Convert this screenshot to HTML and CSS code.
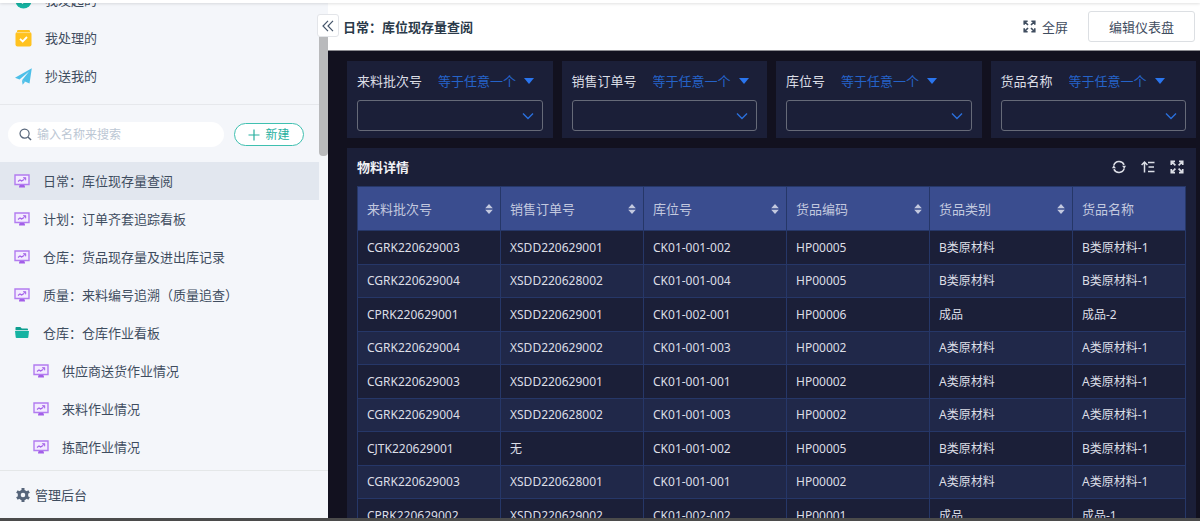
FILE: index.html
```html
<!DOCTYPE html>
<html lang="zh-CN">
<head>
  <meta charset="UTF-8">
  <meta name="viewport" content="width=device-width, initial-scale=1.0">
  <title>日常：库位现存量查阅</title>
  <link rel="stylesheet" href="styles.css">
</head>
<body>

<svg class="sprite" aria-hidden="true">
  <symbol id="icon-board" viewBox="0 0 16 14">
    <path d="M1 1h14v9.500H1z" fill="#f3ebff" stroke="#b27cf0" stroke-width="1.400"/>
    <path d="M4 7.500l2-1.600 1.600 1.200L10 5.400" fill="none" stroke="#a35fe8" stroke-width="1.200"/>
    <path d="M9.200 3.600h2.600v2.600z" fill="#a35fe8" stroke="#a35fe8" stroke-width=".6"/>
    <path d="M5.500 11h5v1.200H11v1.400H5v-1.400h.5z" fill="#a35fe8"/>
  </symbol>
  <symbol id="icon-expand" viewBox="0 0 14 14">
    <path d="M1.300 5V1.300H5M9 1.300h3.700V5M12.700 9v3.700H9M5 12.700H1.300V9M1.500 1.500l3.900 3.900M12.500 1.500L8.600 5.400M12.500 12.500L8.600 8.600M1.500 12.500l3.900-3.900" fill="none" stroke="currentColor" stroke-width="1.700"/>
  </symbol>
  <symbol id="icon-down" viewBox="0 0 12 8">
    <path d="M1 1.500l5 5 5-5" fill="none" stroke="currentColor" stroke-width="1.400"/>
  </symbol>
  <symbol id="icon-caret" viewBox="0 0 10 6">
    <path d="M0 0h10L5 6z" fill="currentColor"/>
  </symbol>
  <symbol id="icon-sort" viewBox="0 0 8 10">
    <path d="M4 0l3.800 4.300H.2zM4 10L.2 5.700h7.600z" fill="currentColor"/>
  </symbol>
</svg>

<div class="topbar"></div>

<div class="app">
  <aside class="sidebar">
    <div class="sidebar-scroll">
      <nav class="quick">
        <a href="#"><svg class="icon-quick" viewBox="0 0 17 17"><circle cx="8.500" cy="8.500" r="8" fill="#16b3a2"/><path d="M5 8.500l2.500 2.500L12 6.500" fill="none" stroke="#fff" stroke-width="1.500"/></svg>我发起的</a>
        <a href="#"><svg class="icon-quick" viewBox="0 0 17 17"><rect x="2" y="0" width="13" height="3" rx="1.200" fill="#ffc21f"/><rect x=".5" y="2" width="16" height="14.500" rx="2" fill="#ffc21f"/><path d="M1.500 2.600h14" stroke="#fbe3a4" stroke-width=".8"/><path d="M5 8.800l2.700 2.600L12 7" fill="none" stroke="#fff" stroke-width="1.800"/></svg>我处理的</a>
        <a href="#"><svg class="icon-quick" viewBox="0 0 17 17"><path d="M16.800.2L0 9.800l4.500 1.600L14 3.600 7 12.200l7.500 3.400zM7 12.400l.6 4.400 2.500-3z" fill="#4cbfe8"/></svg>抄送我的</a>
      </nav>

      <div class="search-row">
        <label class="search">
          <svg class="icon-search" viewBox="0 0 14 14"><circle cx="6" cy="6" r="4.900" fill="none" stroke="#56657a" stroke-width="1.300"/><path d="M9.600 9.600l3.400 3.400" stroke="#56657a" stroke-width="1.500"/></svg>
          <input type="text" placeholder="输入名称来搜索" aria-label="搜索">
        </label>
        <button class="btn-new"><svg class="icon-plus" viewBox="0 0 12 12"><path d="M6 .5v11M.5 6h11" stroke="currentColor" stroke-width="1.200"/></svg>新建</button>
      </div>

      <nav class="menu">
        <a href="#" class="active"><svg class="icon-menu"><use href="#icon-board"/></svg>日常：库位现存量查阅</a>
        <a href="#"><svg class="icon-menu"><use href="#icon-board"/></svg>计划：订单齐套追踪看板</a>
        <a href="#"><svg class="icon-menu"><use href="#icon-board"/></svg>仓库：货品现存量及进出库记录</a>
        <a href="#"><svg class="icon-menu"><use href="#icon-board"/></svg>质量：来料编号追溯（质量追查）</a>
        <a href="#"><svg class="icon-menu" viewBox="0 0 16 14"><path d="M1.500 1.800q0-.8.8-.8h4l1.500 1.500h5.400q.8 0 .8.900v.800H1.500z" fill="#0d9e8f"/><path d="M1 5h14l-.7 6.300q-.1.700-.8.700h-11q-.7 0-.8-.7z" fill="#16b3a2"/></svg>仓库：仓库作业看板</a>
        <a href="#" class="child"><svg class="icon-menu"><use href="#icon-board"/></svg>供应商送货作业情况</a>
        <a href="#" class="child"><svg class="icon-menu"><use href="#icon-board"/></svg>来料作业情况</a>
        <a href="#" class="child"><svg class="icon-menu"><use href="#icon-board"/></svg>拣配作业情况</a>
      </nav>
    </div>
    <div class="scroll-thumb"></div>
    <a href="#" class="admin"><svg class="icon-gear" viewBox="0 0 14 14"><circle cx="7" cy="7" r="3.800" fill="none" stroke="#56657a" stroke-width="3"/><path d="M7 0v3M7 11v3M.9 3.500l2.600 1.500M10.500 9l2.600 1.500M.9 10.500L3.500 9M10.500 5l2.600-1.500" stroke="#56657a" stroke-width="3"/></svg>管理后台</a>
    <button class="collapse" aria-label="收起"><svg class="icon-collapse" viewBox="0 0 12 12"><path d="M6 .8L1 6l5 5.200M11 .8L6 6l5 5.200" fill="none" stroke="#45556a" stroke-width="1.200"/></svg></button>
  </aside>

  <main class="main">
    <header class="page-head">
      <h1>日常：库位现存量查阅</h1>
      <button class="btn-full"><svg class="icon-full"><use href="#icon-expand"/></svg>全屏</button>
      <button class="btn-edit">编辑仪表盘</button>
    </header>

    <div class="board">
      <section class="filters">
        <div class="filter">
          <div class="filter-head">
            <label for="f1">来料批次号</label>
            <select class="cond" aria-label="条件"><option>等于任意一个</option></select>
            <svg class="icon-caret"><use href="#icon-caret"/></svg>
          </div>
          <div class="picker"><select id="f1"><option></option></select><svg class="icon-down"><use href="#icon-down"/></svg></div>
        </div>
        <div class="filter">
          <div class="filter-head">
            <label for="f2">销售订单号</label>
            <select class="cond" aria-label="条件"><option>等于任意一个</option></select>
            <svg class="icon-caret"><use href="#icon-caret"/></svg>
          </div>
          <div class="picker"><select id="f2"><option></option></select><svg class="icon-down"><use href="#icon-down"/></svg></div>
        </div>
        <div class="filter">
          <div class="filter-head">
            <label for="f3">库位号</label>
            <select class="cond" aria-label="条件"><option>等于任意一个</option></select>
            <svg class="icon-caret"><use href="#icon-caret"/></svg>
          </div>
          <div class="picker"><select id="f3"><option></option></select><svg class="icon-down"><use href="#icon-down"/></svg></div>
        </div>
        <div class="filter">
          <div class="filter-head">
            <label for="f4">货品名称</label>
            <select class="cond" aria-label="条件"><option>等于任意一个</option></select>
            <svg class="icon-caret"><use href="#icon-caret"/></svg>
          </div>
          <div class="picker"><select id="f4"><option></option></select><svg class="icon-down"><use href="#icon-down"/></svg></div>
        </div>
      </section>

      <section class="detail">
        <div class="detail-head">
          <h2>物料详情</h2>
          <button aria-label="刷新"><svg class="icon-tool" viewBox="0 0 14 14"><path d="M1.800 5.500a5.500 5.500 0 0 1 10.300-.6M12.200 8.500a5.500 5.500 0 0 1-10.300.6" fill="none" stroke="currentColor" stroke-width="1.500"/><path d="M0 8.200h4L1.600 5.200zM14 5.800h-4l2.400 3z" fill="currentColor"/></svg></button>
          <button aria-label="排序"><svg class="icon-tool" viewBox="0 0 14 14"><path d="M3.500 12.500V2.500M.6 5l2.900-3 2.900 3M7 2.500h6.500M7.500 7h5.500M7 11.500h6.500" fill="none" stroke="currentColor" stroke-width="1.500"/></svg></button>
          <button aria-label="放大"><svg class="icon-tool"><use href="#icon-expand"/></svg></button>
        </div>
        <table>
          <thead>
            <tr>
              <th>来料批次号<svg class="icon-sort"><use href="#icon-sort"/></svg></th>
              <th>销售订单号<svg class="icon-sort"><use href="#icon-sort"/></svg></th>
              <th>库位号<svg class="icon-sort"><use href="#icon-sort"/></svg></th>
              <th>货品编码<svg class="icon-sort"><use href="#icon-sort"/></svg></th>
              <th>货品类别<svg class="icon-sort"><use href="#icon-sort"/></svg></th>
              <th class="last">货品名称</th>
            </tr>
          </thead>
          <tbody>
            <tr><td>CGRK220629003</td><td>XSDD220629001</td><td>CK01-001-002</td><td>HP00005</td><td>B类原材料</td><td>B类原材料-1</td></tr>
            <tr><td>CGRK220629004</td><td>XSDD220628002</td><td>CK01-001-004</td><td>HP00005</td><td>B类原材料</td><td>B类原材料-1</td></tr>
            <tr><td>CPRK220629001</td><td>XSDD220629001</td><td>CK01-002-001</td><td>HP00006</td><td>成品</td><td>成品-2</td></tr>
            <tr><td>CGRK220629004</td><td>XSDD220629002</td><td>CK01-001-003</td><td>HP00002</td><td>A类原材料</td><td>A类原材料-1</td></tr>
            <tr><td>CGRK220629003</td><td>XSDD220629001</td><td>CK01-001-001</td><td>HP00002</td><td>A类原材料</td><td>A类原材料-1</td></tr>
            <tr><td>CGRK220629004</td><td>XSDD220628002</td><td>CK01-001-003</td><td>HP00002</td><td>A类原材料</td><td>A类原材料-1</td></tr>
            <tr><td>CJTK220629001</td><td>无</td><td>CK01-001-002</td><td>HP00005</td><td>B类原材料</td><td>B类原材料-1</td></tr>
            <tr><td>CGRK220629003</td><td>XSDD220628001</td><td>CK01-001-001</td><td>HP00002</td><td>A类原材料</td><td>A类原材料-1</td></tr>
            <tr><td>CPRK220629002</td><td>XSDD220629002</td><td>CK01-002-002</td><td>HP00001</td><td>成品</td><td>成品-1</td></tr>
          </tbody>
        </table>
      </section>
    </div>
  </main>
</div>

<div class="bottombar"></div>

</body>
</html>
```
FILE: styles.css
```css
* {
  box-sizing: border-box;
}

body {
  margin: 0;
  height: 100vh;
  display: flex;
  flex-direction: column;
  overflow: hidden;
  font-family: "Noto Sans", "Noto Sans CJK SC", sans-serif;
  font-size: 13px;
  line-height: 20px;
  color: #3f4d5f;
}

a {
  color: inherit;
  text-decoration: none;
}

button,
input,
select {
  margin: 0;
  padding: 0;
  border: none;
  background: none;
  font: inherit;
  color: inherit;
  appearance: none;
}

button {
  cursor: pointer;
}

svg {
  display: block;
  flex-shrink: 0;
}

.sprite {
  position: absolute;
  width: 0;
  height: 0;
}

.topbar {
  flex: none;
  height: 3px;
  background: #fff;
  box-shadow: 0 1px 3px rgba(0, 0, 0, 0.12);
  z-index: 2;
}

.bottombar {
  flex: none;
  height: 3px;
  background: #4b4b4b;
}

.app {
  flex: 1;
  min-height: 0;
  display: flex;
}

/* sidebar */
.sidebar {
  position: relative;
  width: 328px;
  flex: none;
  display: flex;
  flex-direction: column;
  background: #f4f6fa;
}

.sidebar-scroll {
  flex: 1;
  min-height: 0;
  overflow: hidden;
  padding-right: 9px;
}

.quick {
  margin-top: -22px;
  padding-bottom: 9px;
  border-bottom: 1px solid #e6e8ec;
}

.quick a {
  display: flex;
  align-items: center;
  gap: 13px;
  height: 38px;
  padding-left: 15px;
}

.icon-quick {
  width: 17px;
  height: 17px;
}

.search-row {
  display: flex;
  align-items: center;
  gap: 10px;
  height: 57px;
  padding: 2px 15px 0 8px;
}

.search {
  flex: 1;
  display: flex;
  align-items: center;
  gap: 5px;
  height: 25px;
  padding: 0 11px;
  border-radius: 13px;
  background: #fff;
}

.search input {
  flex: 1;
  min-width: 0;
  font-size: 12px;
  outline: none;
}

.search input::placeholder {
  color: #bcc7d4;
}

.icon-search {
  width: 13px;
  height: 13px;
}

.btn-new {
  display: flex;
  align-items: center;
  justify-content: center;
  gap: 5px;
  width: 70px;
  height: 23px;
  border: 1px solid #3fc0b0;
  border-radius: 12px;
  background: #fff;
  color: #27b09f;
  font-size: 12px;
}

.icon-plus {
  width: 12px;
  height: 12px;
}

.menu a {
  display: flex;
  align-items: center;
  gap: 13px;
  height: 38px;
  padding-left: 14px;
}

.menu .active {
  background: #e2e7ef;
}

.menu .child {
  padding-left: 33px;
}

.icon-menu {
  width: 16px;
  height: 14px;
}

.scroll-thumb {
  position: absolute;
  top: 14px;
  right: 0;
  width: 9px;
  height: 139px;
  border-radius: 4px;
  background: #b9babc;
}

.admin {
  display: flex;
  align-items: center;
  gap: 5px;
  height: 48px;
  padding-left: 16px;
  border-top: 1px solid #e4e7e8;
}

.icon-gear {
  width: 14px;
  height: 14px;
}

.collapse {
  position: absolute;
  top: 11px;
  right: -11px;
  z-index: 1;
  width: 22px;
  height: 23px;
  padding-left: 4px;
  border: 1px solid #e3e5e9;
  border-radius: 3px;
  background: #fff;
}

.icon-collapse {
  width: 12px;
  height: 12px;
}

/* page header */
.main {
  flex: 1;
  min-width: 0;
  display: flex;
  flex-direction: column;
  background: #12111f;
}

.page-head {
  flex: none;
  display: flex;
  align-items: center;
  height: 48px;
  padding: 0 5px 0 15px;
  border-bottom: 1px solid #8b8b90;
  background: #fff;
}

h1,
h2 {
  flex: 1;
  margin: 0;
  font-size: 13px;
  font-weight: bold;
}

h1 {
  color: #2b3a4a;
}

.btn-full {
  display: flex;
  align-items: center;
  gap: 6px;
  margin-right: 20px;
}

.icon-full {
  width: 13px;
  height: 13px;
}

.btn-edit {
  width: 107px;
  height: 31px;
  border: 1px solid #dcdfe3;
  border-radius: 3px;
}

/* dashboard */
.board {
  flex: 1;
  min-height: 0;
  display: flex;
  flex-direction: column;
  gap: 10px;
  padding: 10px 4px 0 19px;
  color: #dcdee6;
}

.filters {
  display: grid;
  grid-template-columns: repeat(4, 1fr);
  gap: 9px;
}

.filter {
  height: 77px;
  padding: 10px 10px 0;
  background: #1b1f38;
}

.filter-head {
  display: flex;
  align-items: center;
  height: 20px;
  margin-bottom: 9px;
}

.cond {
  margin: 0 7px 0 16px;
  color: #2563c9;
}

.icon-caret {
  width: 10px;
  height: 6px;
  color: #2a75ee;
}

.picker {
  position: relative;
}

.picker select {
  display: block;
  width: 100%;
  height: 31px;
  padding: 0 8px;
  border: 1px solid #666a78;
  border-radius: 3px;
}

.icon-down {
  position: absolute;
  top: 12px;
  right: 9px;
  width: 12px;
  height: 8px;
  color: #2a6fdb;
  pointer-events: none;
}

.detail {
  flex: 1;
  min-height: 0;
  overflow: hidden;
  padding: 0 10px;
  background: #1b1f38;
}

.detail-head {
  display: flex;
  align-items: center;
  gap: 15px;
  height: 38px;
  padding-right: 2px;
}

h2 {
  color: #f0f1f5;
}

.icon-tool {
  width: 14px;
  height: 14px;
}

table {
  width: 100%;
  table-layout: fixed;
  border-collapse: collapse;
}

th,
td {
  padding: 0 9px;
  border: 1px solid #263768;
  text-align: left;
  white-space: nowrap;
}

th {
  position: relative;
  width: 143px;
  height: 44px;
  background: #3a4d8f;
  color: #c3c9df;
  font-weight: normal;
}

th.last {
  width: auto;
}

td {
  height: 34px;
  font-size: 12px;
}

tbody tr:nth-child(even) td {
  height: 33px;
  background: #202849;
}

.icon-sort {
  position: absolute;
  top: 17px;
  right: 7px;
  width: 8px;
  height: 10px;
}
```
